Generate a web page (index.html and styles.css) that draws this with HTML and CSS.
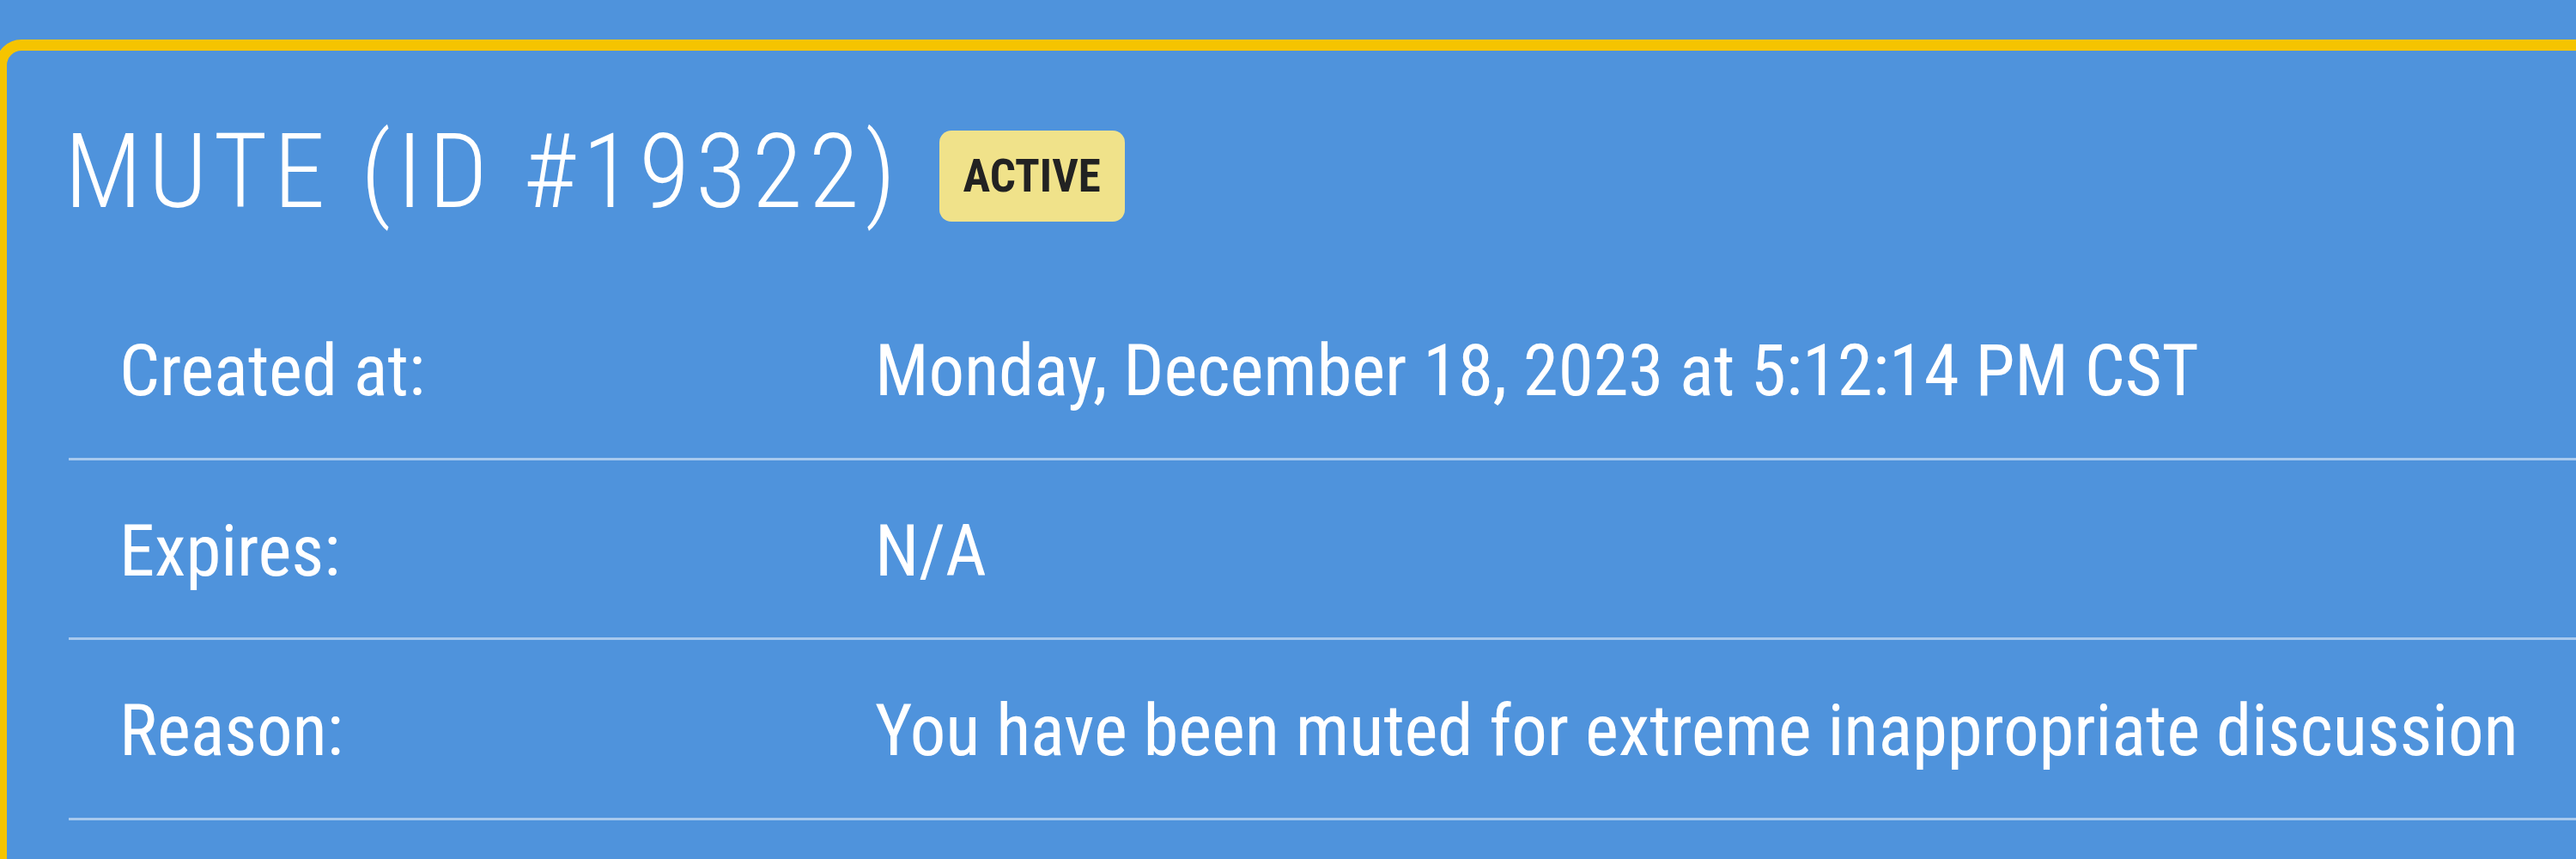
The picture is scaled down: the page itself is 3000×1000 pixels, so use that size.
FILE: index.html
```html
<!DOCTYPE html>
<html>
<head>
	<title>Punishment Details</title>
	<link rel="stylesheet" href="styles.css">
</head>
<body>
	<!-- Punishment Card -->
	<section class="card">
		<h2 class="card-title">
			<span class="title-text">MUTE (ID #19322)</span>
			<span class="badge">ACTIVE</span>
		</h2>

		<table class="details">
			<tr>
				<td class="label">Created at:</td>
				<td>Monday, December 18, 2023 at 5:12:14 PM CST</td>
			</tr>
			<tr>
				<td class="label">Expires:</td>
				<td>N/A</td>
			</tr>
			<tr>
				<td class="label">Reason:</td>
				<td>You have been muted for extreme inappropriate discussion</td>
			</tr>
		</table>
	</section>
</body>
</html>
```

FILE: styles.css
```css
body {
	margin: 0;
	background-color: #4f93dc;
	color: #fff;
	font-family: "Roboto Condensed", Roboto, sans-serif;
	font-stretch: 87%;
	overflow: hidden;
}

.card {
	margin: 46px -400px 0 -5px;
	padding: 69px 0 0 72px;
	border: 13px solid #f5c400;
	border-radius: 30px;
	height: 1200px;
}

.card-title {
	display: flex;
	align-items: center;
	gap: 43px;
	margin: 0 0 0 -5px;
	font-size: 121px;
	font-weight: 300;
	line-height: 1.2;
	letter-spacing: 0.058em;
}

.badge {
	margin-top: 8px;
	padding: 32px 28px;
	border-radius: 14px;
	background-color: #f0e28a;
	color: #222;
	font-size: 53px;
	font-weight: 700;
	line-height: 42px;
	letter-spacing: 0;
}

.details {
	width: 3100px;
	margin-top: 53px;
	border-collapse: collapse;
	table-layout: fixed;
	font-size: 83px;
	line-height: 1.5;
	letter-spacing: -0.15px;
}

.details td {
	padding: 44px 0 38px 0;
	border-bottom: 3px solid rgba(255, 255, 255, 0.5);
	white-space: nowrap;
}

.details td.label {
	width: 880px;
	padding-left: 59px;
}
```
